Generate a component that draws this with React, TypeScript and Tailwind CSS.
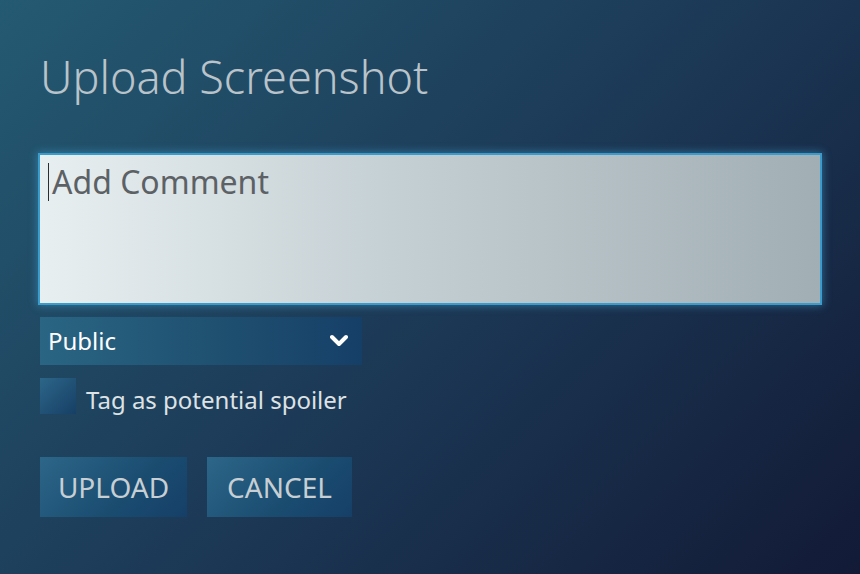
import React, { useState } from 'react';

const App: React.FC = () => {
  const [comment, setComment] = useState('');
  const [spoiler, setSpoiler] = useState(false);

  return (
    <div
      className="h-[574px] w-[860px] overflow-hidden bg-[linear-gradient(135deg,#245a72_0%,#1d3d5a_45%,#121a36_100%)] px-10 pt-[48px]"
      style={{ fontFamily: '"Noto Sans", "Open Sans", sans-serif' }}
    >
      <h1 className="text-[45px] font-light leading-[58px] text-[#b9c3c9]">Upload Screenshot</h1>

      {/* Comment box */}
      <div className="relative mt-[49px] h-[148px] w-[780px] bg-[linear-gradient(90deg,#e8eff1_0%,#c5d0d4_45%,#a1aeb3_100%)] shadow-[0_0_0_2px_#3a9ccc,0_0_8px_3px_rgba(70,170,220,0.45)]">
        <textarea
          value={comment}
          onChange={(e) => setComment(e.target.value)}
          placeholder="Add Comment"
          className="h-full w-full resize-none bg-transparent pl-[12px] pt-[6px] text-[32px] leading-[42px] text-[#3d4145] caret-transparent outline-none placeholder:text-[#5c6165]"
        />
        {comment === '' && <span className="pointer-events-none absolute left-[8px] top-[8px] h-[38px] w-px bg-[#2a2e32]" />}
      </div>

      {/* Visibility select */}
      <div className="mt-[14px] flex h-[48px] w-[322px] items-center justify-between bg-[linear-gradient(90deg,#2a6584_0%,#1f5070_55%,#163f68_100%)] pl-2 pr-[14px]">
        <span className="text-[24px] text-white">Public</span>
        <svg width="18" height="14" viewBox="0 0 18 14" fill="none">
          <path d="M2 3 L9 10 L16 3" stroke="#ffffff" strokeWidth="4" strokeLinecap="round" strokeLinejoin="round" />
        </svg>
      </div>

      {/* Spoiler checkbox */}
      <label className="mt-[13px] flex h-9 cursor-pointer items-start gap-[10px]" onClick={() => setSpoiler(!spoiler)}>
        <span className="flex h-9 w-9 items-center justify-center bg-[linear-gradient(135deg,#2c6688_0%,#173f66_100%)]">
          {spoiler && (
            <svg width="22" height="18" viewBox="0 0 22 18" fill="none">
              <path d="M3 9 L9 15 L19 3" stroke="#ffffff" strokeWidth="3" />
            </svg>
          )}
        </span>
        <span className="pt-[6px] text-[24px] leading-8 text-[#dde2e5]">Tag as potential spoiler</span>
      </label>

      {/* Actions */}
      <div className="mt-[43px] flex gap-5">
        <button className="h-[60px] w-[147px] bg-[linear-gradient(135deg,#2c6688_0%,#1a4c70_60%,#163f68_100%)] text-[28px] text-[#c7cfd4]">
          UPLOAD
        </button>
        <button className="h-[60px] w-[145px] bg-[linear-gradient(135deg,#2c6688_0%,#1a4c70_60%,#163f68_100%)] text-[28px] text-[#c7cfd4]">
          CANCEL
        </button>
      </div>
    </div>
  );
};

export default App;
